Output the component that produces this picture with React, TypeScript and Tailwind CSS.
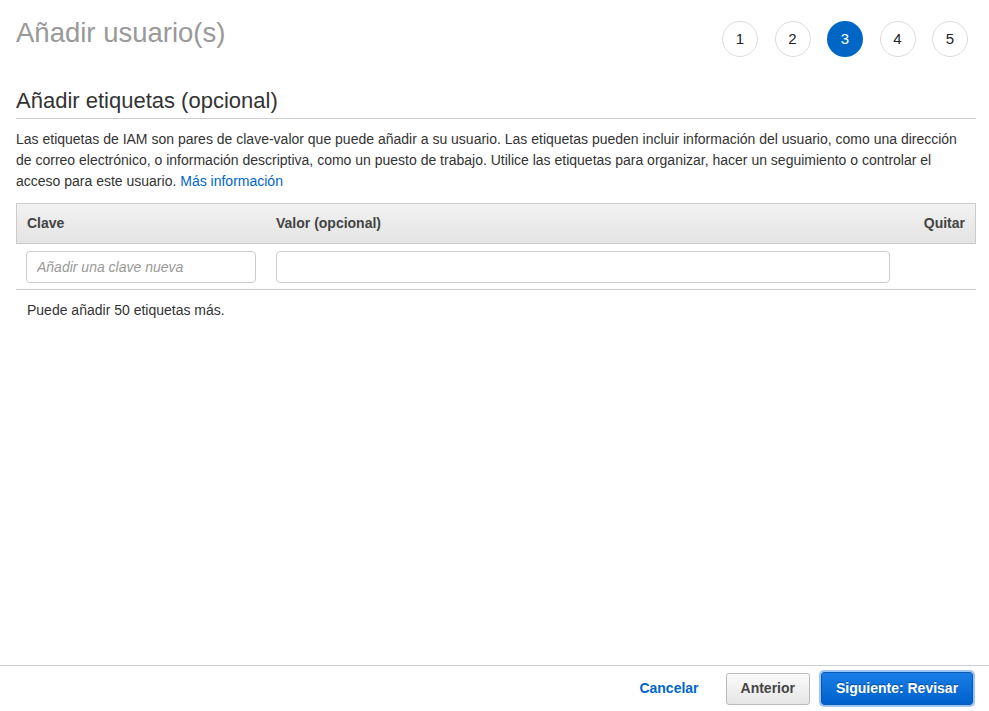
import React from "react";

const font = { fontFamily: '"Liberation Sans", Arial, Helvetica, sans-serif' };

function Step({ n, active }: { n: number; active?: boolean }) {
  return (
    <div
      className={
        active
          ? "w-[36px] h-[36px] rounded-full bg-[#0066c6] text-white flex items-center justify-center text-[15px]"
          : "w-[36px] h-[36px] rounded-full border border-[#dcdcdc] bg-white text-[#222] flex items-center justify-center text-[15px]"
      }
    >
      {n}
    </div>
  );
}

export default function App() {
  return (
    <div className="h-[711px] w-[989px] bg-white flex flex-col text-[#333]" style={font}>
      <div className="pl-[16px] pr-[13px]">
        <div className="flex justify-between items-start">
          <h1 className="text-[27.5px] leading-[36px] text-[#999] mt-[15px]">Añadir usuario(s)</h1>
          <div className="flex gap-[16.5px] mt-[21px] mr-[8px]">
            <Step n={1} />
            <Step n={2} />
            <Step n={3} active />
            <Step n={4} />
            <Step n={5} />
          </div>
        </div>
        <h2 className="mt-[30px] text-[22px] leading-[28px] text-[#333] pb-[3px] border-b border-[#cfcfcf]">
          Añadir etiquetas (opcional)
        </h2>
        <p className="mt-[10px] text-[14px] leading-[21px] text-[#333]">
          Las etiquetas de IAM son pares de clave-valor que puede añadir a su usuario. Las etiquetas pueden incluir información del usuario, como una dirección
          <br />
          de correo electrónico, o información descriptiva, como un puesto de trabajo. Utilice las etiquetas para organizar, hacer un seguimiento o controlar el
          <br />
          acceso para este usuario. <span className="text-[#0066cc]">Más información</span>
        </p>
        <div className="mt-[11px]">
          <div className="flex h-[41px] items-center bg-gradient-to-b from-[#f2f2f2] to-[#e4e4e4] border border-[#cccccc] text-[14px] font-bold text-[#444]">
            <div className="w-[259px] pl-[10px]">Clave</div>
            <div className="w-[614px]">Valor (opcional)</div>
            <div className="flex-1 text-right pr-[10px]">Quitar</div>
          </div>
          <div className="flex h-[46px] items-center border-b border-[#cccccc]">
            <div className="w-[260px] pl-[10px]">
              <input
                className="w-[230px] h-[32px] rounded-[4px] border border-[#cccccc] px-[10px] text-[14px] italic placeholder:text-[#999] outline-none"
                placeholder="Añadir una clave nueva"
                style={font}
              />
            </div>
            <div className="w-[614px]">
              <input className="w-[614px] h-[32px] rounded-[4px] border border-[#cccccc] px-[10px] text-[14px] outline-none" style={font} />
            </div>
            <div className="flex-1" />
          </div>
          <div className="pl-[11px] mt-[10px] text-[14px] leading-[21px] text-[#333]">Puede añadir 50 etiquetas más.</div>
        </div>
      </div>
      <div className="mt-auto border-t border-[#cfcfcf] h-[46px] flex items-center justify-end pr-[16px]">
        <span className="text-[14px] font-bold text-[#0066cc] mr-[27px]">Cancelar</span>
        <button
          className="h-[32px] px-[14px] rounded-[3px] border border-[#bbbbbb] bg-gradient-to-b from-[#fafafa] to-[#e6e6e6] text-[14px] font-bold text-[#444] mr-[11px]"
          style={font}
        >
          Anterior
        </button>
        <button
          className="h-[33px] w-[152px] rounded-[3px] border border-[#0a58b6] bg-gradient-to-b from-[#1a7ee6] to-[#0060cc] text-[14px] font-bold text-white shadow-[0_0_0_2px_#9cc5f4] [text-shadow:0_-1px_0_rgba(0,0,0,0.35)]"
          style={font}
        >
          Siguiente: Revisar
        </button>
      </div>
    </div>
  );
}
